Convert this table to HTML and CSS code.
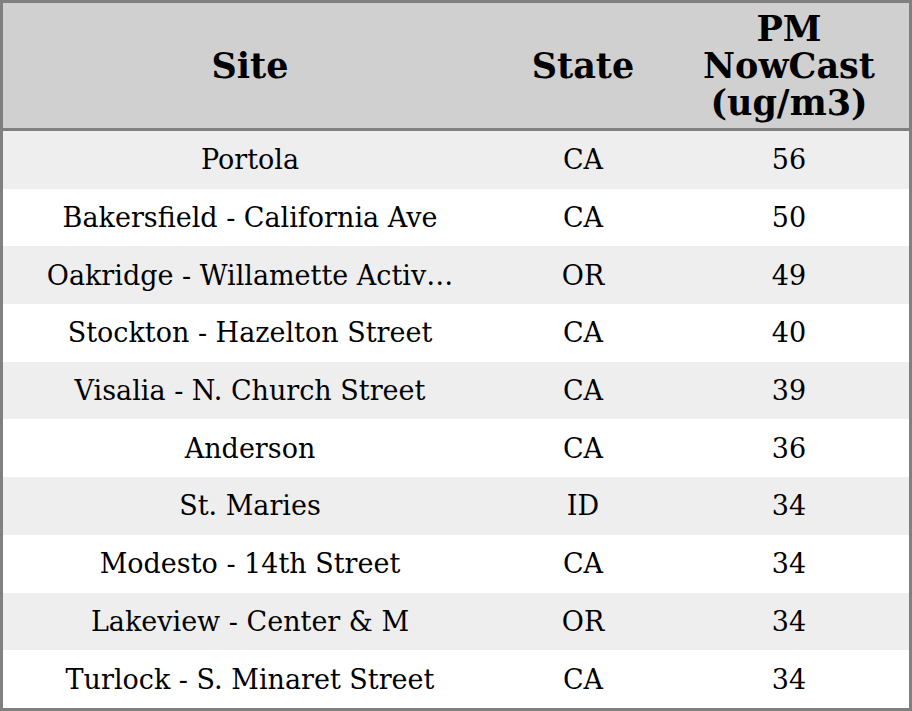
FILE: index.html
```html
<!DOCTYPE html>
<html lang="en">
<head>
<meta charset="utf-8">
<title>PM NowCast</title>
<link rel="stylesheet" href="styles.css">
</head>
<body>
<table class="aq-table">
  <colgroup>
    <col class="col-site">
    <col class="col-state">
    <col class="col-pm">
  </colgroup>
  <thead>
    <tr class="head-row">
      <th>Site</th>
      <th>State</th>
      <th>PM<br>NowCast<br>(ug/m3)</th>
    </tr>
  </thead>
  <tbody>
    <tr><td>Portola</td><td>CA</td><td>56</td></tr>
    <tr><td>Bakersfield - California Ave</td><td>CA</td><td>50</td></tr>
    <tr><td>Oakridge - Willamette Activ…</td><td>OR</td><td>49</td></tr>
    <tr><td>Stockton - Hazelton Street</td><td>CA</td><td>40</td></tr>
    <tr><td>Visalia - N. Church Street</td><td>CA</td><td>39</td></tr>
    <tr><td>Anderson</td><td>CA</td><td>36</td></tr>
    <tr><td>St. Maries</td><td>ID</td><td>34</td></tr>
    <tr><td>Modesto - 14th Street</td><td>CA</td><td>34</td></tr>
    <tr><td>Lakeview - Center &amp; M</td><td>OR</td><td>34</td></tr>
    <tr><td>Turlock - S. Minaret Street</td><td>CA</td><td>34</td></tr>
  </tbody>
</table>
</body>
</html>
```

FILE: styles.css
```css
html, body {
  margin: 0;
  padding: 0;
  background: #ffffff;
}

.aq-table {
  width: 912px;
  height: 711px;
  box-sizing: border-box;
  border: 3px solid #808080;
  border-collapse: separate;
  border-spacing: 0;
  table-layout: fixed;
  font-family: "DejaVu Serif", serif;
  color: #000000;
}

.col-site { width: 494px; }
.col-state { width: 172px; }
.col-pm { width: 240px; }

.head-row th {
  height: 125px;
  padding: 0;
  background: #d0d0d0;
  border-bottom: 3px solid #808080;
  font-size: 35px;
  font-weight: bold;
  line-height: 37px;
  text-align: center;
  vertical-align: middle;
}

.aq-table td {
  height: 57.7px;
  padding: 0;
  font-size: 27px;
  text-align: center;
  vertical-align: middle;
  white-space: nowrap;
}

.aq-table tbody tr:nth-child(odd) td {
  background: #eeeeee;
}

.aq-table tbody tr:nth-child(even) td {
  background: #ffffff;
}
```
